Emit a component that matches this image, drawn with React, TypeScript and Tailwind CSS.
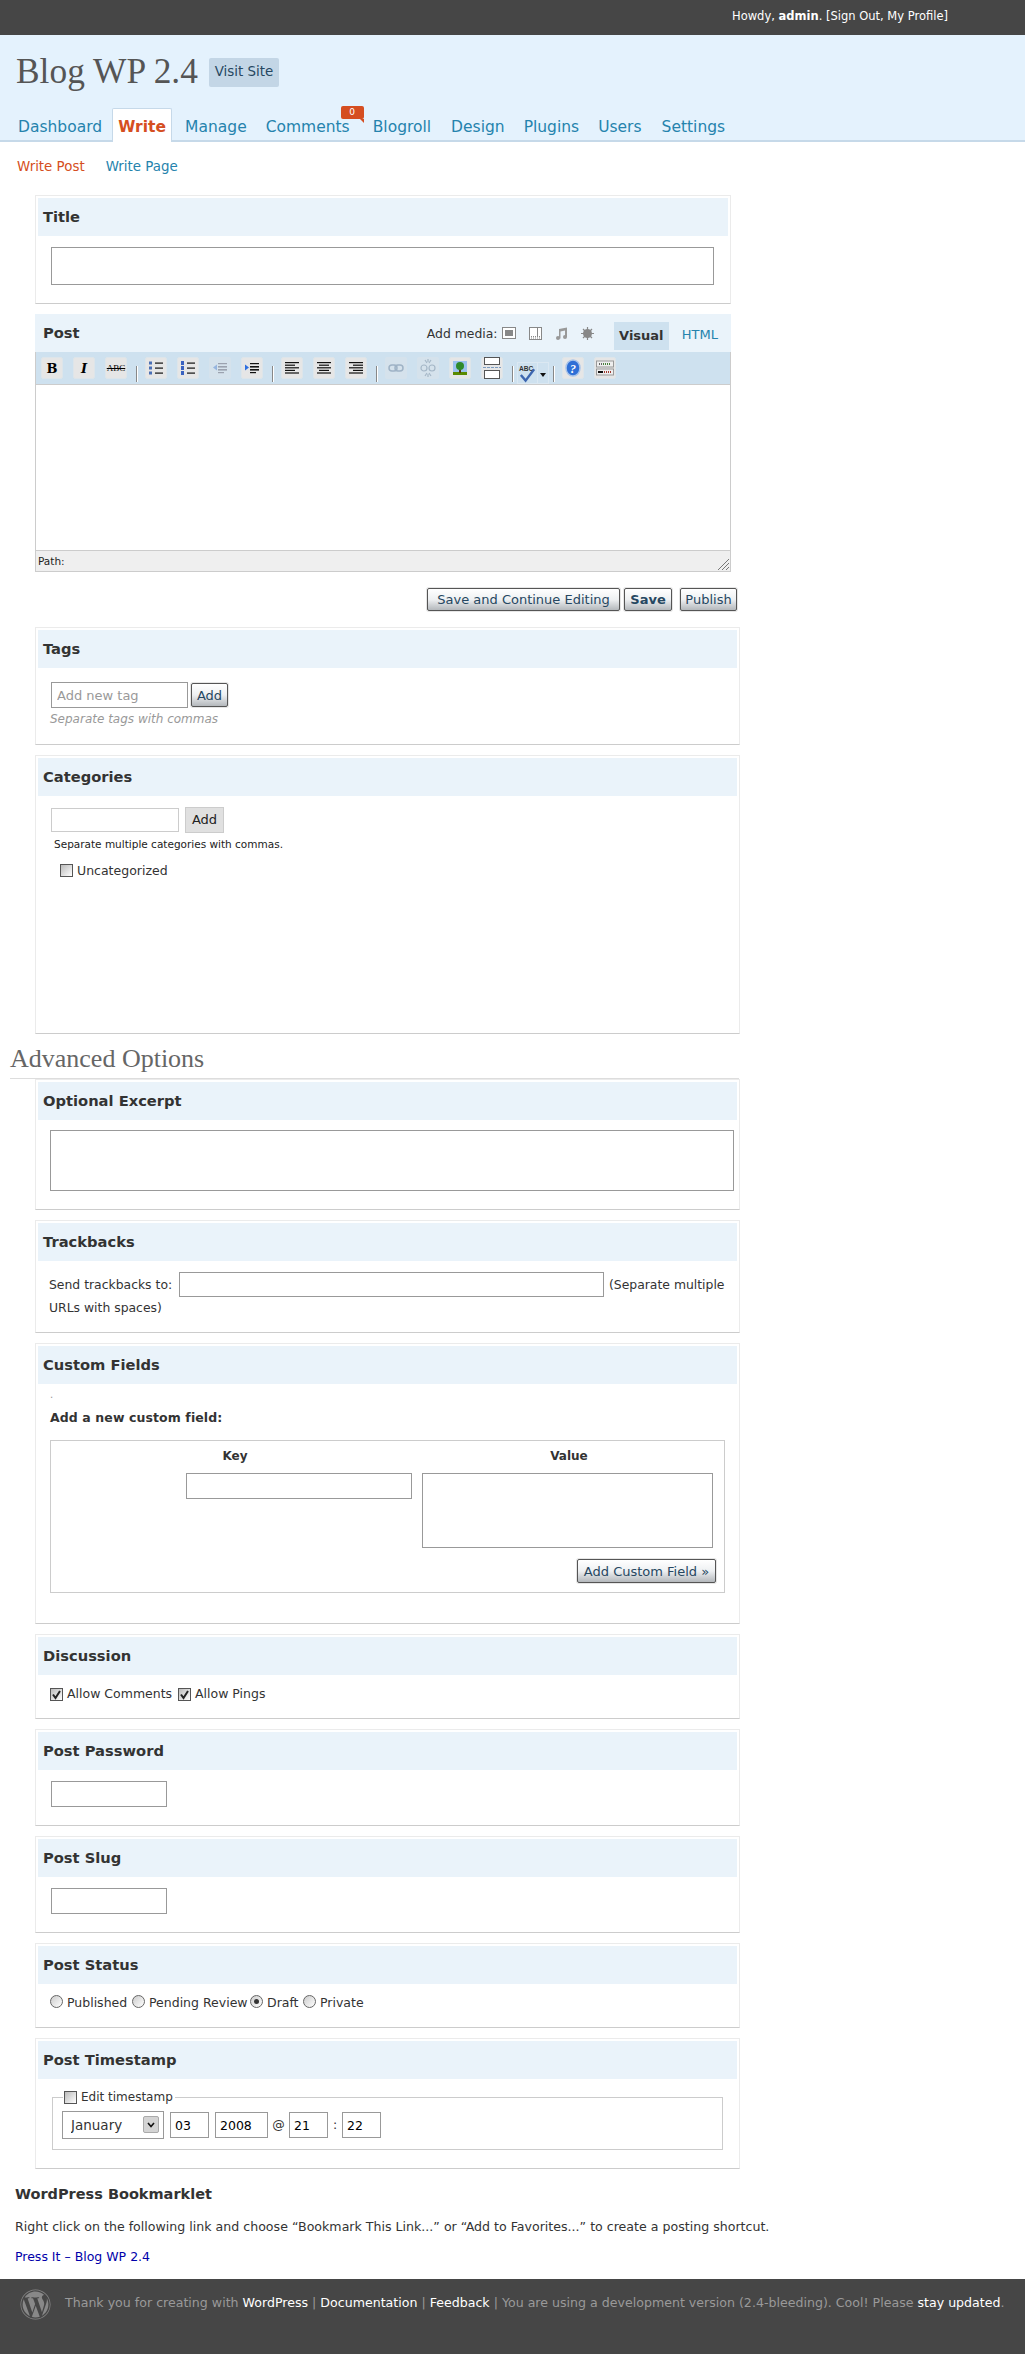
import type { ReactNode } from "react";
import { FaWordpress } from "react-icons/fa";

const sans = "font-['DejaVu_Sans',Verdana,sans-serif]";
const serif = "font-['Liberation_Serif',Georgia,serif]";
const field = "block border border-[#999] bg-white";
const btn =
  "border border-[#555] rounded-[2px] bg-gradient-to-b from-white via-[#eef0f2] to-[#b4b8bc] text-[#264761] text-[13px] leading-none h-[23px] shadow-[0_0_0_1px_#e6e6e6]";
const head = "h-[38px] bg-[#eaf3fa] pl-[5px] flex items-center text-[14.7px] font-bold text-[#333]";

function Box({ title, children, bodyClass }: { title: string; children?: ReactNode; bodyClass: string }) {
  return (
    <section className="ml-[35px] mb-[10px] w-[705px] border border-[#ebebeb] border-b-[#ccc] p-[2px]">
      <h3 className={head}>{title}</h3>
      <div className={bodyClass}>{children}</div>
    </section>
  );
}

function Check({ checked }: { checked?: boolean }) {
  return (
    <span className="relative inline-block size-[13px] shrink-0">
      <input
        type="checkbox"
        defaultChecked={checked}
        className="block size-[13px] appearance-none border border-[#555] bg-gradient-to-br from-[#bbb] to-white"
      />
      {checked && (
        <svg viewBox="0 0 13 13" className="absolute inset-0 size-[13px] pointer-events-none">
          <path d="M3 6.5 L5.5 10 L10 3" fill="none" stroke="#222" strokeWidth="2" />
        </svg>
      )}
    </span>
  );
}

function Radio({ checked }: { checked?: boolean }) {
  return (
    <span className="relative inline-block size-[13px] shrink-0">
      <input
        type="radio"
        defaultChecked={checked}
        className="block size-[13px] appearance-none rounded-full border border-[#666] bg-gradient-to-br from-[#ccc] to-white"
      />
      {checked && <span className="absolute left-[4px] top-[4px] size-[5px] rounded-full bg-[#333]" />}
    </span>
  );
}

function TBtn({ children, off, className = "" }: { children: ReactNode; off?: boolean; className?: string }) {
  return (
    <span
      className={`size-[22px] shrink-0 rounded-[2px] flex items-center justify-center ${
        off ? "bg-[#d5e2ec]" : "bg-[#e6e6e6] border border-[#dde5ea]"
      } ${className}`}
    >
      {children}
    </span>
  );
}

function Sep({ className }: { className: string }) {
  return <span className={`w-[1px] h-[16px] mt-[9px] bg-[#888] shadow-[1px_0_0_#fff] shrink-0 ${className}`} />;
}

function Lines({ kind }: { kind: "left" | "center" | "right" }) {
  const rows = [14, 10, 14, 10, 14];
  return (
    <svg width="16" height="14" viewBox="0 0 16 14">
      {rows.map((w, i) => {
        const x = kind === "left" ? 1 : kind === "right" ? 15 - w : 8 - w / 2;
        return <rect key={i} x={x} y={1 + i * 2.6} width={w} height="1.2" fill="#111" />;
      })}
    </svg>
  );
}

function Toolbar() {
  return (
    <div className="h-[33px] bg-[#cee1ef] border-b border-b-[#ccc] flex items-start pt-[5px] pl-[5px]">
      <TBtn>
        <span className="font-['DejaVu_Serif',serif] font-bold text-[13px] text-black leading-none">B</span>
      </TBtn>
      <TBtn className="ml-[10px]">
        <span className="font-['DejaVu_Serif',serif] font-bold italic text-[13px] text-black leading-none">I</span>
      </TBtn>
      <TBtn className="ml-[10px]">
        <span className="font-['Liberation_Serif',serif] line-through text-[9px] text-black leading-none">ABC</span>
      </TBtn>
      <Sep className="ml-[9px]" />
      <TBtn className="ml-[8px]">
        <svg width="16" height="14" viewBox="0 0 16 14">
          {[2, 7, 12].map((y) => (
            <g key={y}>
              <rect x="1" y={y - 1.5} width="3" height="3" fill="#4a6fb5" />
              <rect x="7" y={y - 0.5} width="8" height="1.2" fill="#111" />
            </g>
          ))}
        </svg>
      </TBtn>
      <TBtn className="ml-[10px]">
        <svg width="16" height="14" viewBox="0 0 16 14">
          {[2, 7, 12].map((y) => (
            <g key={y}>
              <rect x="1" y={y - 2} width="3" height="4" fill="#3a62c0" />
              <rect x="7" y={y - 0.5} width="8" height="1.2" fill="#111" />
            </g>
          ))}
        </svg>
      </TBtn>
      <TBtn off className="ml-[10px]">
        <svg width="16" height="16" viewBox="0 0 16 16" opacity="0.45">
          <path d="M1 7.5 L5 4.5 V10.5 Z" fill="#4a7fd0" />
          <rect x="6" y="3" width="9" height="1.2" fill="#556" />
          <rect x="6" y="6" width="9" height="1.6" fill="#556" />
          <rect x="6" y="9" width="9" height="1.6" fill="#556" />
          <rect x="6" y="12" width="6" height="1.2" fill="#556" />
        </svg>
      </TBtn>
      <TBtn className="ml-[10px]">
        <svg width="16" height="16" viewBox="0 0 16 16">
          <path d="M5 7.5 L1 4.5 V10.5 Z" fill="#2e6fe0" />
          <rect x="6" y="3" width="9" height="1.2" fill="#111" />
          <rect x="6" y="6" width="9" height="1.6" fill="#111" />
          <rect x="6" y="9" width="9" height="1.6" fill="#111" />
          <rect x="6" y="12" width="6" height="1.2" fill="#111" />
        </svg>
      </TBtn>
      <Sep className="ml-[9px]" />
      <TBtn className="ml-[8px]">
        <Lines kind="left" />
      </TBtn>
      <TBtn className="ml-[10px]">
        <Lines kind="center" />
      </TBtn>
      <TBtn className="ml-[10px]">
        <Lines kind="right" />
      </TBtn>
      <Sep className="ml-[9px]" />
      <TBtn off className="ml-[8px]">
        <svg width="16" height="10" viewBox="0 0 16 10" fill="none" stroke="#9fb3c6" strokeWidth="1.5">
          <rect x="1" y="2" width="8" height="6" rx="3" />
          <rect x="7" y="2" width="8" height="6" rx="3" />
        </svg>
      </TBtn>
      <TBtn off className="ml-[10px]">
        <svg width="16" height="18" viewBox="0 0 16 18" fill="none" stroke="#a5b7c7" strokeWidth="1.2">
          <rect x="1" y="6" width="6" height="6" rx="3" />
          <rect x="9" y="6" width="6" height="6" rx="3" />
          <path d="M5 1 L7 4 M11 1 L9 4 M8 0 V3 M5 17 L7 14 M11 17 L9 14 M8 18 V15" />
        </svg>
      </TBtn>
      <TBtn className="ml-[10px]">
        <svg width="16" height="16" viewBox="0 0 16 16">
          <rect x="1" y="1" width="14" height="14" fill="#9cc2ee" />
          <rect x="1" y="12" width="14" height="3" fill="#5a8a00" />
          <rect x="7" y="9" width="2" height="4" fill="#5a3a10" />
          <circle cx="8" cy="6" r="4" fill="#2f8a2a" />
        </svg>
      </TBtn>
      <TBtn className="ml-[10px]">
        <svg width="18" height="22" viewBox="0 0 18 22" fill="#fff" stroke="#555">
          <rect x="1.5" y="0.5" width="15" height="7" />
          <rect x="1.5" y="13.5" width="15" height="8" />
          <path d="M0 10.5 H18" stroke="#7c9cc0" strokeDasharray="3 1" fill="none" />
        </svg>
      </TBtn>
      <Sep className="ml-[9px]" />
      <span className="ml-[4px] mt-[5px] h-[22px] w-[32px] border border-[#dbe8f2] flex shrink-0">
        <svg width="20" height="20" viewBox="0 0 20 20" className="border-r border-r-[#dbe8f2]">
          <text x="1" y="8" fontSize="7" fontWeight="bold" fill="#333" fontFamily="Liberation Sans">ABC</text>
          <path d="M3 12 L8 18 L17 6" fill="none" stroke="#3c66b0" strokeWidth="2.5" />
        </svg>
        <svg width="10" height="20" viewBox="0 0 10 20">
          <path d="M2 10 H8 L5 14 Z" fill="#111" />
        </svg>
      </span>
      <Sep className="ml-[4px]" />
      <TBtn className="ml-[8px]">
        <svg width="16" height="18" viewBox="0 0 16 18">
          <ellipse cx="8" cy="9" rx="7" ry="8" fill="#2f6fd6" stroke="#a8c4ea" strokeWidth="1.5" />
          <text x="8" y="14" textAnchor="middle" fontSize="12" fontWeight="bold" fontStyle="italic" fill="#fff" fontFamily="Liberation Serif">?</text>
        </svg>
      </TBtn>
      <TBtn className="ml-[10px]">
        <svg width="18" height="18" viewBox="0 0 18 18">
          <rect x="0.5" y="2" width="17" height="6" fill="#eee" stroke="#999" />
          <rect x="0.5" y="10" width="17" height="6" fill="#eee" stroke="#999" />
          <path d="M3 5 H6" stroke="#666" strokeWidth="2" strokeDasharray="1 1" />
          <path d="M7 5 H15" stroke="#47803a" strokeWidth="2" strokeDasharray="1 1" />
          <path d="M2 13 H7" stroke="#111" strokeWidth="2" />
          <path d="M8 13 H16" stroke="#a03a30" strokeWidth="2" strokeDasharray="1 1" />
        </svg>
      </TBtn>
    </div>
  );
}

function MediaIcons() {
  return (
    <>
      <svg width="14" height="12" viewBox="0 0 14 12" className="ml-[5px] shrink-0">
        <rect x="0.5" y="0.5" width="13" height="11" fill="#fff" stroke="#888" />
        <rect x="3" y="3" width="8" height="6" fill="#888" />
      </svg>
      <svg width="13" height="13" viewBox="0 0 13 13" className="ml-[13px] shrink-0">
        <rect x="0.5" y="0.5" width="12" height="12" fill="#fff" stroke="#888" />
        <rect x="8" y="1" width="1" height="8" fill="#888" />
        <path d="M0 9.5 H13 M2 11 H11" stroke="#888" strokeDasharray="1 1" />
      </svg>
      <svg width="13" height="13" viewBox="0 0 13 13" className="ml-[13px] shrink-0">
        <path d="M4 2 L12 0.5 V10 H10 V3.5 L5.5 4.5 V11.5 H4 Z" fill="#999" />
        <circle cx="3" cy="11" r="2" fill="#999" />
        <circle cx="10" cy="10" r="2" fill="#999" />
      </svg>
      <svg width="13" height="13" viewBox="0 0 13 13" className="ml-[13px] shrink-0">
        <circle cx="6.5" cy="6.5" r="4.5" fill="#888" />
        <path d="M6.5 0 V13 M0 6.5 H13 M2 2 L11 11 M11 2 L2 11" stroke="#888" strokeWidth="1.2" />
      </svg>
    </>
  );
}

const navExtra: Record<string, string> = {
  Comments: "-ml-[1px] mr-[3px]",
  Plugins: "-ml-[1px]",
  Users: "-ml-[1px]",
};

export default function App() {
  const nav = ["Dashboard", "Write", "Manage", "Comments", "Blogroll", "Design", "Plugins", "Users", "Settings"];
  return (
    <div className={`${sans} bg-white text-[#333] text-[13px] w-[1025px] min-h-[2354px]`}>
      <div className="h-[35px] bg-[#464646] text-white text-[11.5px] flex items-center pl-[732px] pb-[1px]">
        <span>
          Howdy, <b>admin</b>. [Sign Out, My Profile]
        </span>
      </div>

      <header className="h-[107px] bg-[#e4f2fd] border-b-2 border-b-[#c6d9e9]">
        <div className="flex items-start pt-[16px] pl-[16px]">
          <h1 className={`${serif} text-[35.4px] leading-[41px] text-[#555]`}>Blog WP 2.4</h1>
          <span className="ml-[11px] mt-[7px] h-[29px] w-[70px] bg-[#c3d6e6] rounded-[2px] flex items-center justify-center text-[13.4px] text-[#264761]">
            Visit Site
          </span>
        </div>
        <nav className="flex mt-[16px] pl-[8px] h-[34px] text-[15.5px] text-[#2583ad]">
          {nav.map((n) =>
            n === "Write" ? (
              <span
                key={n}
                className="h-[34px] w-[60px] mr-[3px] pt-[7px] text-center bg-white border border-b-0 border-[#c6d9e9] rounded-t-[2px] font-bold text-[#d54e21]"
              >
                {n}
              </span>
            ) : (
              <span key={n} className={`relative px-[10px] pt-[8px] ${navExtra[n] ?? ""}`}>
                {n}
                {n === "Comments" && (
                  <span className="absolute left-[85px] -top-[2px] w-[23px] h-[13px] bg-[#d54e21] rounded-[2px] text-white text-[9px] leading-[13px] text-center">
                    0
                    <span className="absolute right-0 top-[13px] size-0 border-t-[4px] border-t-[#d54e21] border-l-[4px] border-l-transparent" />
                  </span>
                )}
              </span>
            ),
          )}
        </nav>
      </header>

      <div className="flex h-[53px] pl-[17px] pt-[15px] text-[13.4px] leading-[20px]">
        <span className="text-[#d54e21]">Write Post</span>
        <span className="ml-[21px] text-[#2583ad]">Write Page</span>
      </div>

      <section className="ml-[35px] mb-[10px] w-[696px] border border-[#ebebeb] border-b-[#ccc] p-[2px]">
        <h3 className={head}>Title</h3>
        <div className="pl-[13px] pt-[11px] h-[65px]">
          <input className={`${field} w-[663px] h-[38px]`} />
        </div>
      </section>

      <section className="ml-[35px] w-[696px]">
        <div className="h-[38px] bg-[#eaf3fa] flex items-center pl-[8px] pr-[13px]">
          <h3 className="text-[14.7px] font-bold text-[#333]">Post</h3>
          <span className="ml-auto w-[70px] whitespace-nowrap pt-[2px] text-[12.4px]">Add media:</span>
          <MediaIcons />
          <span className="ml-[20px] mt-[8px] self-start h-[28px] w-[55px] shrink-0 bg-[#cee1ef] flex items-center justify-center font-bold text-[13px] text-[#333]">
            Visual
          </span>
          <span className="ml-[13px] text-[#2583ad] mt-[4px]">HTML</span>
        </div>
        <div className="border-x border-[#ccc]">
          <Toolbar />
          <div className="h-[165px] bg-white" />
          <div className="relative h-[22px] bg-[#efefef] border-y border-[#ccc] text-[10.5px] pl-[2px] leading-[20px] text-[#222]">
            Path:
            <svg width="11" height="11" viewBox="0 0 11 11" className="absolute right-[1px] bottom-[1px]">
              <path d="M0 11 L11 0 M4 11 L11 4 M8 11 L11 8" stroke="#777" fill="none" />
            </svg>
          </div>
        </div>
      </section>

      <div className="ml-[427px] mt-[16px] mb-[16px] flex">
        <button className={`${btn} w-[193px]`}>Save and Continue Editing</button>
        <button className={`${btn} ml-[4px] w-[48px] font-bold`}>Save</button>
        <button className={`${btn} ml-[8px] w-[57px]`}>Publish</button>
      </div>

      <Box title="Tags" bodyClass="pl-[13px] pt-[14px] h-[74px]">
        <div className="flex items-center">
          <input placeholder="Add new tag" className={`${field} w-[137px] h-[26px] px-[5px] placeholder:text-[#999]`} />
          <button className={`${btn} ml-[3px] w-[37px] h-[24px]`}>Add</button>
        </div>
        <p className="mt-[2px] text-[12px] italic text-[#999] -ml-[1px]">Separate tags with commas</p>
      </Box>

      <Box title="Categories" bodyClass="pl-[13px] pt-[11px] h-[235px]">
        <div className="flex items-center">
          <input className="block w-[128px] h-[24px] border border-[#ccc] bg-white" />
          <button className="ml-[6px] w-[39px] h-[26px] bg-[#e0e0e0] border border-[#ccc] text-[13px] text-[#222]">Add</button>
        </div>
        <p className="mt-[3px] ml-[3px] text-[10.5px] leading-[16px] text-[#222]">Separate multiple categories with commas.</p>
        <label className="mt-[11px] ml-[9px] flex items-center">
          <Check />
          <span className="ml-[4px] text-[12.5px] leading-[15px]">Uncategorized</span>
        </label>
      </Box>

      <h2 className={`${serif} ml-[10px] w-[729px] h-[35px] border-b border-b-[#ddd] text-[26px] leading-[30px] text-[#666]`}>Advanced Options</h2>

      <Box title="Optional Excerpt" bodyClass="pl-[12px] pt-[10px] h-[87px]">
        <textarea className={`${field} w-[684px] h-[61px] resize-none`} />
      </Box>

      <Box title="Trackbacks" bodyClass="pl-[11px] pt-[11px] h-[69px] text-[12.4px] leading-[21px]">
        <div className="flex items-center">
          <span className="w-[130px] shrink-0 whitespace-nowrap">Send trackbacks to:</span>
          <input className={`${field} w-[425px] h-[25px] shrink-0`} />
          <span className="ml-[5px] whitespace-nowrap">(Separate multiple</span>
        </div>
        URLs with spaces)
      </Box>

      <Box title="Custom Fields" bodyClass="pl-[12px] pt-[4px] h-[237px]">
        <p className="h-[14px] text-[#999] text-[10px] leading-[14px]">.</p>
        <p className="mt-[9px] h-[29px] font-bold text-[12.5px] leading-[14px] text-[#333] tracking-[0.1px]">Add a new custom field:</p>
        <div className="w-[675px] h-[153px] border border-[#ccc]">
          <div className="flex pt-[8px] text-[12px] font-bold leading-[14px]">
            <span className="ml-[134px] w-[100px] text-center">Key</span>
            <span className="ml-[234px] w-[100px] text-center">Value</span>
          </div>
          <div className="flex pl-[135px] pt-[10px]">
            <input className={`${field} w-[226px] h-[26px]`} />
            <textarea className={`${field} ml-[10px] w-[291px] h-[75px] resize-none`} />
          </div>
          <div className="flex justify-end pr-[8px] pt-[11px]">
            <button className={`${btn} w-[139px] h-[24px]`}>Add Custom Field »</button>
          </div>
        </div>
      </Box>

      <Box title="Discussion" bodyClass="h-[41px] pl-[12px] pt-[13px] flex items-start text-[12.5px] leading-[15px]">
        <Check checked />
        <span className="ml-[4px] w-[111px] -mt-[2px] whitespace-nowrap">Allow Comments</span>
        <Check checked />
        <span className="ml-[4px] -mt-[2px]">Allow Pings</span>
      </Box>

      <Box title="Post Password" bodyClass="h-[53px] pl-[13px] pt-[11px]">
        <input className={`${field} w-[116px] h-[26px]`} />
      </Box>

      <Box title="Post Slug" bodyClass="h-[53px] pl-[13px] pt-[11px]">
        <input className={`${field} w-[116px] h-[26px]`} />
      </Box>

      <Box title="Post Status" bodyClass="h-[41px] pl-[12px] pt-[11px] flex items-start text-[12.5px] leading-[16px]">
        <Radio />
        <span className="ml-[4px] w-[65px] whitespace-nowrap">Published</span>
        <Radio />
        <span className="ml-[4px] w-[101px] whitespace-nowrap">Pending Review</span>
        <Radio checked />
        <span className="ml-[4px] w-[36px]">Draft</span>
        <Radio />
        <span className="ml-[4px]">Private</span>
      </Box>

      <Box title="Post Timestamp" bodyClass="h-[87px] pl-[14px] pt-[10px]">
        <fieldset className="w-[671px] h-[61px] border border-[#ccc] pl-[10px]">
          <legend className="flex items-center px-[1px] text-[12px] leading-[16px]">
            <Check />
            <span className="ml-[4px] pr-[1px]">Edit timestamp</span>
          </legend>
          <div className="flex items-center text-[12.5px] mt-[6px] -ml-[1px]">
            <span className="relative block shrink-0">
              <select className="block w-[102px] h-[28px] appearance-none border border-[#999] bg-white pl-[8px] text-[13.5px]">
                <option>January</option>
              </select>
              <span className="absolute right-[5px] top-[5px] w-[16px] h-[17px] bg-[#d4d4d4] border border-[#aaa] rounded-[2px] flex items-center justify-center pointer-events-none">
                <svg width="8" height="6" viewBox="0 0 8 6">
                  <path d="M1 1 L4 4.5 L7 1" stroke="#111" strokeWidth="1.6" fill="none" />
                </svg>
              </span>
            </span>
            <input defaultValue="03" className={`${field} ml-[6px] w-[39px] h-[26px] pl-[4px] text-black`} />
            <input defaultValue="2008" className={`${field} ml-[6px] w-[53px] h-[26px] pl-[4px] text-black`} />
            <span className="w-[21px] text-center">@</span>
            <input defaultValue="21" className={`${field} w-[39px] h-[26px] pl-[4px] text-black`} />
            <span className="w-[14px] text-center">:</span>
            <input defaultValue="22" className={`${field} w-[39px] h-[26px] pl-[4px] text-black`} />
          </div>
        </fieldset>
      </Box>

      <div className="pl-[15px] pt-[6px] h-[100px]">
        <h3 className="text-[14.5px] font-bold leading-[18px] text-[#333]">WordPress Bookmarklet</h3>
        <p className="mt-[15px] text-[12.6px] leading-[18px] text-[#333] whitespace-nowrap">
          Right click on the following link and choose “Bookmark This Link...” or “Add to Favorites...” to create a posting shortcut.
        </p>
        <p className="mt-[12px] text-[12.5px] leading-[18px] text-[#00a]">Press It – Blog WP 2.4</p>
      </div>

      <footer className="h-[75px] bg-[#464646] flex items-start pl-[20px] pt-[10px] text-[12.6px] text-[#999]">
        <FaWordpress className="size-[31px] text-[#888] shrink-0" />
        <p className="ml-[14px] mt-[5px] whitespace-nowrap">
          Thank you for creating with <span className="text-white">WordPress</span> | <span className="text-white">Documentation</span> |{" "}
          <span className="text-white">Feedback</span> | You are using a development version (2.4-bleeding). Cool! Please{" "}
          <span className="text-white">stay updated</span>.
        </p>
      </footer>
    </div>
  );
}
